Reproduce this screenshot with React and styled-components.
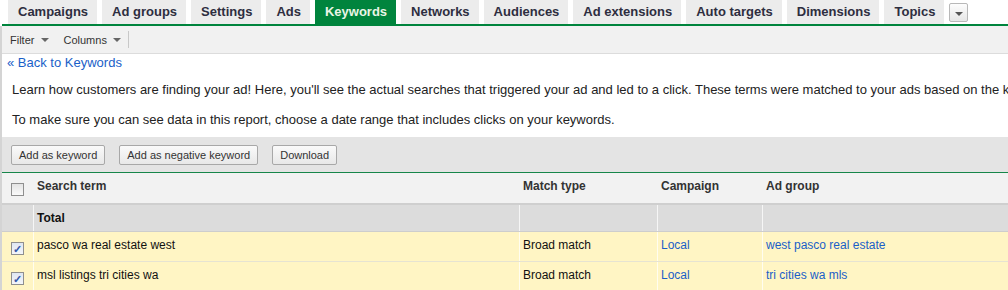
import React from "react";
import styled, { createGlobalStyle } from "styled-components";

const GlobalStyle = createGlobalStyle`
  body {
    margin: 0;
    background: #fff;
    font-family: "Liberation Sans", Arial, sans-serif;
    overflow: hidden;
  }
`;

const tabs = [
  "Campaigns",
  "Ad groups",
  "Settings",
  "Ads",
  "Keywords",
  "Networks",
  "Audiences",
  "Ad extensions",
  "Auto targets",
  "Dimensions",
  "Topics",
];

const rows = [
  { term: "pasco wa real estate west", match: "Broad match", campaign: "Local", group: "west pasco real estate" },
  { term: "msl listings tri cities wa", match: "Broad match", campaign: "Local", group: "tri cities wa mls" },
];

const App = () => {
  return (
    <Page>
      <GlobalStyle />
      <TabBar>
        {tabs.map((t) => (
          <Tab key={t} $active={t === "Keywords"}>
            {t}
          </Tab>
        ))}
        <MoreButton>
          <Caret />
        </MoreButton>
      </TabBar>
      <Panel>
        <Toolbar>
          <ToolItem>
            Filter <SmallCaret />
          </ToolItem>
          <ToolItem>
            Columns <SmallCaret />
          </ToolItem>
          <ToolSep />
        </Toolbar>
        <BackLink>« Back to Keywords</BackLink>
        <Intro $top={11}>
          Learn how customers are finding your ad! Here, you'll see the actual searches that triggered your ad and led to a click. These terms were matched to your ads based on the keywords in your ad group.
        </Intro>
        <Intro $top={14}>
          To make sure you can see data in this report, choose a date range that includes clicks on your keywords.
        </Intro>
        <ButtonBar>
          <Button>Add as keyword</Button>
          <Button>Add as negative keyword</Button>
          <Button>Download</Button>
        </ButtonBar>
        <Table>
          <HeadRow>
            <CheckCell>
              <Check />
            </CheckCell>
            <HeadCell>Search term</HeadCell>
            <HeadCell>Match type</HeadCell>
            <HeadCell>Campaign</HeadCell>
            <HeadCell>Ad group</HeadCell>
          </HeadRow>
          <TotalRow>
            <CheckCell />
            <Cell $bold>Total</Cell>
            <Cell />
            <Cell />
            <Cell />
          </TotalRow>
          {rows.map((r) => (
            <DataRow key={r.term}>
              <CheckCell>
                <Check $checked>✓</Check>
              </CheckCell>
              <Cell>{r.term}</Cell>
              <Cell>{r.match}</Cell>
              <Cell $link>{r.campaign}</Cell>
              <Cell $link>{r.group}</Cell>
            </DataRow>
          ))}
        </Table>
      </Panel>
    </Page>
  );
};

const Page = styled.div`
  width: 1008px;
  height: 290px;
  overflow: hidden;
`;

const TabBar = styled.div`
  display: flex;
  align-items: flex-start;
  gap: 5px;
  height: 24px;
  margin-left: 2px;
  padding-left: 6px;
  border-bottom: 2px solid #00843d;
`;

const Tab = styled.div`
  height: 24px;
  line-height: 23px;
  padding: 0 9px 0 10px;
  font-size: 13px;
  font-weight: bold;
  white-space: nowrap;
  background: ${(p) => (p.$active ? "#00843d" : "#ececec")};
  color: ${(p) => (p.$active ? "#eaf5e6" : "#2e2e40")};
`;

const MoreButton = styled.div`
  width: 17px;
  height: 17px;
  margin-top: 3px;
  border: 1px solid #b8b8b8;
  border-radius: 2px;
  background: linear-gradient(#fdfdfd, #e6e6e6);
  display: flex;
  align-items: center;
  justify-content: center;
`;

const Caret = styled.span`
  width: 0;
  height: 0;
  margin-top: 2px;
  border-left: 4px solid transparent;
  border-right: 4px solid transparent;
  border-top: 4px solid #555;
`;

const SmallCaret = styled(Caret)`
  display: inline-block;
  margin: 0 0 2px 3px;
  border-top-color: #666;
  vertical-align: middle;
`;

const Panel = styled.div`
  border-left: 2px solid #d4d4d4;
`;

const Toolbar = styled.div`
  display: flex;
  align-items: center;
  height: 27px;
  padding-left: 8px;
  gap: 15px;
  background: #f1f1f1;
  border-bottom: 1px solid #dcdcdc;
  font-size: 11px;
  color: #333;
`;

const ToolItem = styled.span`
  white-space: nowrap;
`;

const ToolSep = styled.span`
  width: 1px;
  height: 17px;
  margin-left: -8px;
  background: #c8c8c8;
`;

const BackLink = styled.div`
  padding: 1px 0 0 5px;
  line-height: 16px;
  font-size: 13px;
  color: #1a5fc8;
`;

const Intro = styled.div`
  padding: ${(p) => p.$top}px 0 0 10px;
  line-height: 16px;
  font-size: 13px;
  color: #222;
  white-space: nowrap;
  overflow: hidden;
`;

const ButtonBar = styled.div`
  display: flex;
  align-items: center;
  gap: 14px;
  margin-top: 9px;
  height: 35px;
  padding-left: 9px;
  background: #e4e4e4;
  border-bottom: 1px solid #17864a;
`;

const Button = styled.div`
  height: 18px;
  line-height: 18px;
  padding: 0 7px;
  font-size: 11px;
  color: #333;
  border: 1px solid #a8a8a8;
  border-radius: 2px;
  background: linear-gradient(#fafafa, #e8e8e8);
  white-space: nowrap;
`;

const Table = styled.div`
  font-size: 12px;
`;

const Row = styled.div`
  display: grid;
  grid-template-columns: 31px 486px 138px 105px 1fr;
`;

const HeadRow = styled(Row)`
  height: 30px;
  background: #f2f2f2;
  border-bottom: 2px solid #cfcfcf;
`;

const TotalRow = styled(Row)`
  height: 26px;
  background: #dcdcdc;
  border-bottom: 1px solid #cdcdcd;
`;

const DataRow = styled(Row)`
  height: 29px;
  background: #fff5c4;
  border-bottom: 1px solid #e6e3d2;
`;

const Cell = styled.div`
  padding: 6px 0 0 3px;
  white-space: nowrap;
  border-left: 1px solid rgba(255, 255, 255, 0.75);
  font-weight: ${(p) => (p.$bold ? "bold" : "normal")};
  color: ${(p) => (p.$link ? "#1a5fc8" : "#111")};
`;

const HeadCell = styled(Cell)`
  font-weight: bold;
  color: #333;
  border-left-color: transparent;
`;

const CheckCell = styled.div`
  display: flex;
  justify-content: center;
  padding-top: 10px;
`;

const Check = styled.span`
  width: 11px;
  height: 11px;
  border: 1px solid #8f8f8f;
  background: ${(p) => (p.$checked ? "linear-gradient(#dfe6f2, #f4f6fa)" : "linear-gradient(#e4e4e4, #fafafa)")};
  color: #3558a8;
  font-size: 11px;
  font-weight: bold;
  line-height: 12px;
  text-align: center;
`;

export default App;
